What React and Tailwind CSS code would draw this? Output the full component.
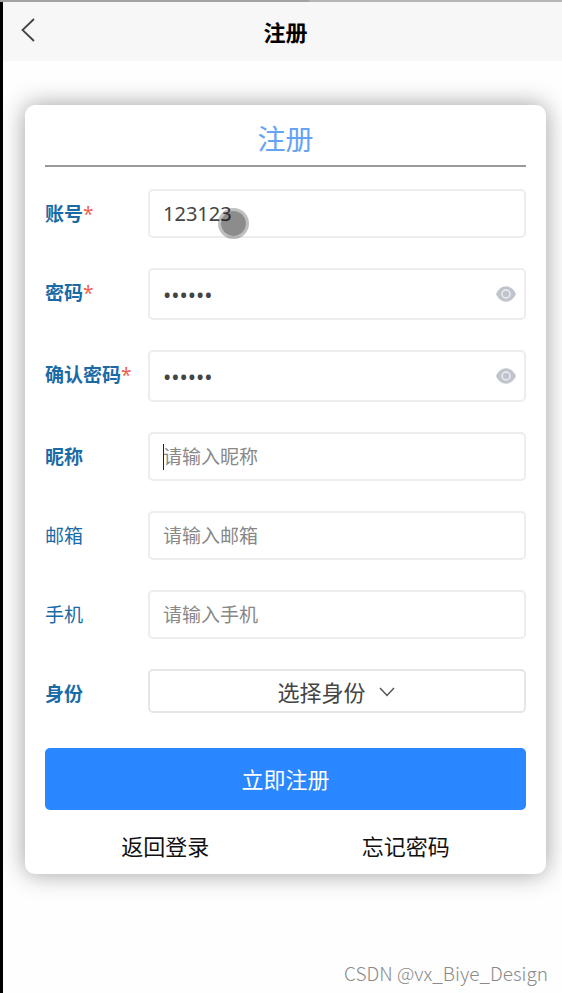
import { useState } from "react";

const fields = [
  { id: "account", label: "账号", required: true, bold: true, type: "text" },
  { id: "password", label: "密码", required: true, bold: true, type: "password" },
  { id: "confirm", label: "确认密码", required: true, bold: true, type: "password" },
  { id: "nickname", label: "昵称", bold: true, type: "text", placeholder: "请输入昵称" },
  { id: "email", label: "邮箱", type: "email", placeholder: "请输入邮箱" },
  { id: "phone", label: "手机", type: "tel", placeholder: "请输入手机" },
];

function EyeIcon() {
  return (
    <svg width="20" height="16" viewBox="0 0 20 16" aria-hidden="true">
      <path
        d="M10 0.300C5.800 0.300 2.200 3.200 0 8c2.200 4.800 5.800 7.700 10 7.700S17.800 12.800 20 8C17.800 3.200 14.200 0.300 10 0.300z"
        fill="#c0c4cc"
      />
      <circle cx="10" cy="8" r="4" fill="#c0c4cc" stroke="#eceef2" strokeWidth="1.500" />
    </svg>
  );
}

function Label({ htmlFor, bold, required, children }) {
  return (
    <label
      htmlFor={htmlFor}
      className={`w-[103px] shrink-0 text-[19px] leading-[50px] text-[#1a6aa6] ${
        bold ? "font-bold" : "font-normal"
      }`}
    >
      {children}
      {required && <span className="font-normal text-[#f0604d]">*</span>}
    </label>
  );
}

export default function App() {
  const [values, setValues] = useState({
    account: "123123",
    password: "123456",
    confirm: "123456",
    nickname: "",
    email: "",
    phone: "",
  });
  const [shown, setShown] = useState({});

  const update = (id, value) => setValues({ ...values, [id]: value });

  return (
    <div className="flex min-h-screen flex-col bg-[#fefefe] font-['Noto_Sans','Noto_Sans_CJK_SC',sans-serif]">
      {/* Window edge */}
      <div className="flex h-0.5">
        <div className="w-[55%] bg-[#a2a2a2]" />
        <div className="flex-1 bg-[#b5b5b5]" />
      </div>

      <div className="flex flex-1 flex-col border-l-[3px] border-black">
        {/* Header */}
        <header className="grid h-[59px] grid-cols-[24px_1fr_24px] items-center bg-[#f7f7f7] pr-4 pl-[22px]">
          <button type="button" aria-label="返回" className="-ml-1 pb-1">
            <svg width="14" height="24" viewBox="0 0 14 24" fill="none" stroke="#444" strokeWidth="1.800">
              <path d="M13 1L1.500 12L13 23" />
            </svg>
          </button>
          <h1 className="text-center text-[22px] leading-8 font-bold text-black">注册</h1>
        </header>

        <main className="pt-11 pr-4 pl-[22px]">
          <form
            className="rounded-[10px] bg-white px-5 shadow-[0_0_24px_rgba(0,0,0,0.38)]"
            onSubmit={(e) => e.preventDefault()}
          >
            <h2 className="mb-[22px] border-b-2 border-[#999] pt-3 pb-1 text-center text-[28px] leading-[44px] text-[#64a3f5]">
              注册
            </h2>

            <div className="flex flex-col gap-[30px]">
              {fields.map((f) => (
                <div key={f.id} className="flex h-[49px] items-start has-[input[autocomplete=new-password]]:h-[52px]">
                  <Label htmlFor={f.id} bold={f.bold} required={f.required}>
                    {f.label}
                  </Label>
                  <div className="relative flex h-full min-w-0 flex-1 items-center rounded-[5px] border-2 border-[#ededef] pr-2 pl-[13px]">
                    <input
                      id={f.id}
                      type={shown[f.id] ? "text" : f.type}
                      autoComplete={f.type === "password" ? "new-password" : "off"}
                      value={values[f.id]}
                      placeholder={f.placeholder}
                      onChange={(e) => update(f.id, e.target.value)}
                      className={`min-w-0 flex-1 bg-transparent text-[#444] outline-none placeholder:text-[19px] placeholder:text-[#888] ${
                        f.type === "password" ? "text-[22px]" : "text-[20px]"
                      }`}
                    />
                    {f.type === "password" && (
                      <button
                        type="button"
                        aria-label="显示密码"
                        onClick={() => setShown({ ...shown, [f.id]: !shown[f.id] })}
                      >
                        <EyeIcon />
                      </button>
                    )}
                    {/* Touch pointer */}
                    {f.id === "account" && (
                      <span className="pointer-events-none absolute top-[17px] left-[68px] size-[31px] rounded-full border-[3px] border-black/25 bg-black/45 bg-clip-padding" />
                    )}
                    {/* Text caret */}
                    {f.id === "nickname" && (
                      <span className="absolute top-2.5 left-[13px] h-[26px] w-px bg-[#222]" />
                    )}
                  </div>
                </div>
              ))}

              <div className="flex h-[49px] items-start">
                <Label htmlFor="role" bold>
                  身份
                </Label>
                <div className="flex h-11 flex-1 items-center justify-center gap-3 rounded-[5px] border-2 border-[#e6e6e8] pt-0.5 pr-0.5">
                  <select
                    id="role"
                    className="appearance-none bg-transparent text-[22px] leading-8 text-[#444] outline-none"
                  >
                    <option>选择身份</option>
                  </select>
                  <svg width="16" height="10" viewBox="0 0 16 10" fill="none" stroke="#555" strokeWidth="1.500">
                    <path d="M1 1L8 8.500L15 1" />
                  </svg>
                </div>
              </div>

              <button
                type="submit"
                className="h-[62px] rounded-[5px] bg-[#2b87ff] text-[22px] text-white"
              >
                立即注册
              </button>
            </div>

            <nav className="grid grid-cols-2 pt-5 pb-3 text-center text-[22px] leading-8 text-[#111]">
              <a href="#login">返回登录</a>
              <a href="#forgot">忘记密码</a>
            </nav>
          </form>
        </main>

        <footer className="mt-auto pr-3.5 pb-1 text-right font-['Noto_Sans_CJK_SC',sans-serif] text-[19px] leading-8 font-light text-[#8a8a8a]">
          CSDN @vx_Biye_Design
        </footer>
      </div>
    </div>
  );
}
